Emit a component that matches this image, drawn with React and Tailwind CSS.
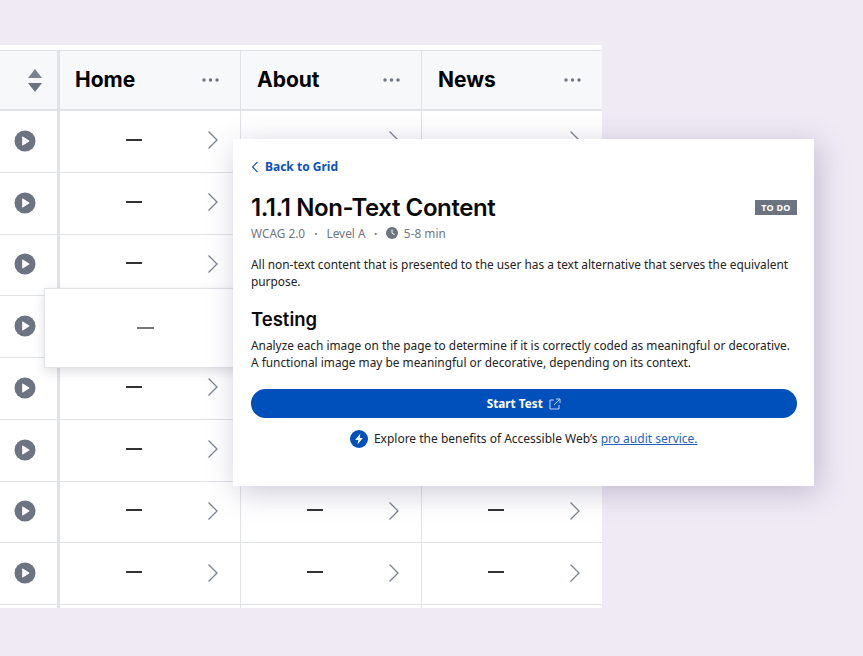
import React from 'react';

const rows = [0, 1, 2, 3, 4, 5, 6, 7, 8];

const Dots = () => (
    <svg width="17" height="4" viewBox="0 0 17 4" className="shrink-0">
        <circle cx="2" cy="2" r="1.7" fill="#6b7480" />
        <circle cx="8.5" cy="2" r="1.7" fill="#6b7480" />
        <circle cx="15" cy="2" r="1.7" fill="#6b7480" />
    </svg>
);

const Chevron = () => (
    <svg width="12" height="20" viewBox="0 0 12 20" fill="none" className="absolute right-[21.5px] top-[calc(50%-1px)] -translate-y-1/2">
        <path d="M1.5 1.5L10 10L1.5 18.5" stroke="#7b838e" strokeWidth="1.3" />
    </svg>
);

const PlayIcon = () => (
    <svg width="22" height="22" viewBox="0 0 22 22">
        <circle cx="11" cy="11" r="10.5" fill="#6b7480" />
        <path d="M8.6 6.8L15.2 11L8.6 15.2Z" fill="#fff" stroke="#fff" strokeWidth="0.8" strokeLinejoin="round" />
    </svg>
);

const HeaderCell = ({ title, className }) => (
    <div className={`flex items-center justify-between shrink-0 pr-[21.5px] ${className}`}>
        <span className="text-[21px] font-bold text-black -mt-[1px]">{title}</span>
        <Dots />
    </div>
);

const DataCell = ({ className }) => (
    <div className={`relative flex items-center justify-center shrink-0 ${className}`}>
        <span className="block w-[16px] h-[2px] bg-[#333] mr-[33px] -mt-[3px]" />
        <Chevron />
    </div>
);

export default function App() {
    return (
        <div className="relative w-[863px] h-[656px] overflow-hidden bg-[#f0eaf5] font-['Inter',sans-serif]">
            <div className="pt-[45px] w-[602px]">
                <div className="bg-white pt-[5px] h-[563px] overflow-hidden">
                    <div className="flex h-[61px] bg-[#f7f8f9] border-t border-b-[2px] border-[#dfe2e6]">
                        <div className="flex items-center justify-end shrink-0 w-[60px] pr-[15.5px] border-r-[3px] border-[#dfe2e6]">
                            <svg width="14" height="23" viewBox="0 0 14 23">
                                <path d="M7 0L14 9H0Z" fill="#7b838e" />
                                <path d="M7 23L14 14H0Z" fill="#6b7480" />
                            </svg>
                        </div>
                        <HeaderCell title="Home" className="w-[181px] pl-[15px] border-r border-[#dfe2e6]" />
                        <HeaderCell title="About" className="w-[181px] pl-[16px] border-r border-[#dfe2e6]" />
                        <HeaderCell title="News" className="w-[180px] pl-[16px]" />
                    </div>
                    {rows.map(row => (
                        <div key={row} className="flex h-[61.75px] border-b-[1.5px] border-[#dfe2e6]">
                            <div className="flex items-center shrink-0 w-[60px] pl-[14px] pb-[1px] border-r-[3px] border-[#dfe2e6]">
                                <PlayIcon />
                            </div>
                            <DataCell className="w-[181px] border-r border-[#dfe2e6]" />
                            <DataCell className="w-[181px] border-r border-[#dfe2e6]" />
                            <DataCell className="w-[180px]" />
                        </div>
                    ))}
                </div>
            </div>

            {/* hovered cell lifted above the grid */}
            <div className="absolute left-[44px] top-[288px] w-[200px] h-[80px] flex items-center justify-center bg-white border border-[#dfe2e6] shadow-[0_4px_10px_rgba(60,60,80,0.16)]">
                <span className="block w-[17px] h-[1.5px] bg-[#777] ml-[2px]" />
            </div>

            <div className="absolute left-[232.5px] top-[139px] w-[581.5px] h-[347px] bg-white pl-[18.5px] pr-[17.5px] pt-[20px] shadow-[4px_6px_28px_rgba(70,60,110,0.28)] font-['Noto_Sans',sans-serif]">
                <a className="flex items-center gap-[6px] text-[12px] leading-[16px] font-bold text-[#0b50be]">
                    <svg width="8" height="12" viewBox="0 0 8 12" fill="none">
                        <path d="M6.5 1L1.5 6L6.5 11" stroke="#0b50be" strokeWidth="1.1" />
                    </svg>
                    Back to Grid
                </a>
                <div className="flex items-center justify-between mt-[17px]">
                    <h1 className="font-['Inter',sans-serif] text-[24px] leading-[32px] font-semibold text-[#0a0a0a] tracking-[-0.4px]">1.1.1 Non-Text Content</h1>
                    <span className="-mt-[2px] bg-[#6b7480] text-white text-[9px] leading-[15px] font-bold tracking-[0.2px] px-[6px]">TO DO</span>
                </div>
                <div className="flex items-center text-[11.85px] leading-[18px] text-[#6f7680]">
                    <span>WCAG 2.0</span>
                    <span className="mx-[9px] font-bold">·</span>
                    <span>Level A</span>
                    <span className="mx-[8.5px] font-bold">·</span>
                    <svg width="12" height="12" viewBox="0 0 12 12" className="mr-[6px]">
                        <circle cx="6" cy="6" r="6" fill="#6b7480" />
                        <path d="M6 2.6V6.2L8.6 7.6" fill="none" stroke="#fff" strokeWidth="1" />
                    </svg>
                    <span>5-8 min</span>
                </div>
                <p className="mt-[14px] text-[11.87px] leading-[17px] text-[#222]">All non-text content that is presented to the user has a text alternative that serves the equivalent purpose.</p>
                <h2 className="mt-[17px] font-['Inter',sans-serif] text-[18.5px] leading-[24px] font-semibold text-[#0a0a0a]">Testing</h2>
                <p className="mt-[6px] text-[11.87px] leading-[17px] text-[#222]">Analyze each image on the page to determine if it is correctly coded as meaningful or decorative. A functional image may be meaningful or decorative, depending on its context.</p>
                <button className="flex items-center justify-center gap-[6px] w-full h-[29px] mt-[18px] rounded-full bg-[#0050bc] text-white text-[11.75px] font-bold">
                    Start Test
                    <svg width="12" height="12" viewBox="0 0 12 12" fill="none" stroke="#d5e2f5" strokeWidth="0.9">
                        <path d="M5 2H1V11H10V7" />
                        <path d="M7 1H11V5M11 1L5 7" />
                    </svg>
                </button>
                <div className="flex items-center justify-center mt-[12px] text-[12px] leading-[18px] text-[#222]">
                    <svg width="18" height="18" viewBox="0 0 18 18" className="mr-[6px]">
                        <circle cx="9" cy="9" r="9" fill="#0050bc" />
                        <path d="M10.4 3.4L5.2 10H8.3L7.5 14.6L12.8 8H9.6Z" fill="#fff" />
                    </svg>
                    <span>Explore the benefits of Accessible Web’s&nbsp;</span>
                    <a className="text-[#1f62c4] underline">pro audit service.</a>
                </div>
            </div>
        </div>
    );
}
